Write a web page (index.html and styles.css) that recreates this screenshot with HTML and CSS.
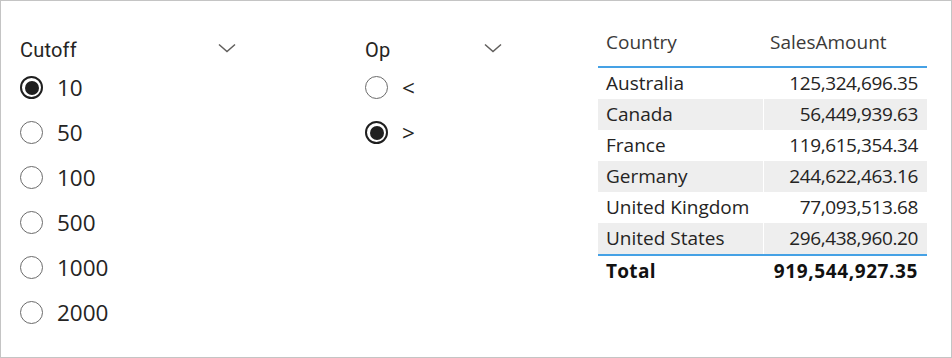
FILE: index.html
```html
<!DOCTYPE html>
<html>
<head>
<meta charset="utf-8">
<link rel="stylesheet" href="styles.css">
</head>
<body>
<div class="frame">
  <div class="slicer slicer-cutoff">
    <div class="slicer-head">
      <span class="slicer-title">Cutoff</span>
      <svg class="chev" width="18" height="10" viewBox="0 0 18 10"><path d="M1 1.5 L9 8.5 L17 1.5" fill="none" stroke="#605e5c" stroke-width="1.5"/></svg>
    </div>
    <ul class="options">
      <li class="opt"><span class="radio on"></span><span class="lbl">10</span></li>
      <li class="opt"><span class="radio"></span><span class="lbl">50</span></li>
      <li class="opt"><span class="radio"></span><span class="lbl">100</span></li>
      <li class="opt"><span class="radio"></span><span class="lbl">500</span></li>
      <li class="opt"><span class="radio"></span><span class="lbl">1000</span></li>
      <li class="opt"><span class="radio"></span><span class="lbl">2000</span></li>
    </ul>
  </div>
  <div class="slicer slicer-op">
    <div class="slicer-head">
      <span class="slicer-title">Op</span>
      <svg class="chev" width="18" height="10" viewBox="0 0 18 10"><path d="M1 1.5 L9 8.5 L17 1.5" fill="none" stroke="#605e5c" stroke-width="1.5"/></svg>
    </div>
    <ul class="options">
      <li class="opt"><span class="radio"></span><span class="lbl">&lt;</span></li>
      <li class="opt"><span class="radio on"></span><span class="lbl">&gt;</span></li>
    </ul>
  </div>
  <table class="grid">
    <thead>
      <tr><th class="c1">Country</th><th class="c2">SalesAmount</th></tr>
    </thead>
    <tbody>
      <tr><td class="c1">Australia</td><td class="c2">125,324,696.35</td></tr>
      <tr class="alt"><td class="c1">Canada</td><td class="c2">56,449,939.63</td></tr>
      <tr><td class="c1">France</td><td class="c2">119,615,354.34</td></tr>
      <tr class="alt"><td class="c1">Germany</td><td class="c2">244,622,463.16</td></tr>
      <tr><td class="c1">United Kingdom</td><td class="c2">77,093,513.68</td></tr>
      <tr class="alt"><td class="c1">United States</td><td class="c2">296,438,960.20</td></tr>
    </tbody>
    <tfoot>
      <tr><td class="c1">Total</td><td class="c2">919,544,927.35</td></tr>
    </tfoot>
  </table>
</div>
</body>
</html>
```
FILE: styles.css
```css
html, body {
  margin: 0;
  padding: 0;
  background: #fff;
}
.frame {
  box-sizing: border-box;
  width: 952px;
  height: 358px;
  border: 1px solid #c4c4c4;
  display: flex;
  align-items: flex-start;
  padding-left: 19px;
  color: #252423;
}
.slicer {
  margin-top: 34px;
}
.slicer-cutoff {
  width: 216px;
}
.slicer-op {
  width: 137px;
  margin-left: 129px;
}
.slicer-head {
  height: 30px;
  display: flex;
  align-items: center;
  justify-content: space-between;
}
.slicer-title {
  font-family: Roboto, "Liberation Sans", sans-serif;
  font-size: 20px;
  line-height: 30px;
  color: #252423;
  letter-spacing: 0.2px;
}
.chev {
  display: block;
  margin-top: -4px;
}
.options {
  list-style: none;
  margin: 0;
  padding: 0;
}
.opt {
  height: 45px;
  display: flex;
  align-items: center;
}
.radio {
  box-sizing: border-box;
  width: 23px;
  height: 23px;
  border-radius: 50%;
  border: 1.5px solid #6b6b6b;
  flex: none;
  display: flex;
  align-items: center;
  justify-content: center;
}
.radio.on {
  border: 2px solid #1f1f1f;
}
.radio.on::after {
  content: "";
  width: 14px;
  height: 14px;
  border-radius: 50%;
  background: #1f1f1f;
}
.lbl {
  margin-left: 14px;
  font-family: "Open Sans", "Noto Sans", sans-serif;
  font-size: 22.5px;
  line-height: 30px;
  color: #252423;
}
.grid {
  margin-top: 26px;
  margin-left: 96px;
  width: 329px;
  border-collapse: collapse;
  font-family: "Open Sans", "Noto Sans", sans-serif;
  font-size: 19px;
  color: #252423;
}
.grid th, .grid td {
  padding: 0;
  height: 31px;
  line-height: 31px;
  white-space: nowrap;
}
.grid .c1 {
  text-align: left;
  padding-left: 8px;
  width: 157px;
  border-right: 1px solid #fff;
}
.grid .c2 {
  text-align: right;
  padding-right: 9px;
}
.grid td.c2 {
  letter-spacing: -0.4px;
}
.grid thead th {
  font-weight: normal;
  color: #3b3a39;
  vertical-align: top;
  height: 39px;
  border-bottom: 2px solid #45a1e5;
}
.grid thead th.c2 {
  text-align: left;
  padding-left: 6px;
}
.grid tr.alt td {
  background: #eeeeee;
}
.grid tfoot td {
  font-weight: bold;
  color: #111;
  border-top: 2px solid #45a1e5;
  letter-spacing: 0.3px;
}
.grid tfoot td.c2 {
  letter-spacing: 0.6px;
}
```
